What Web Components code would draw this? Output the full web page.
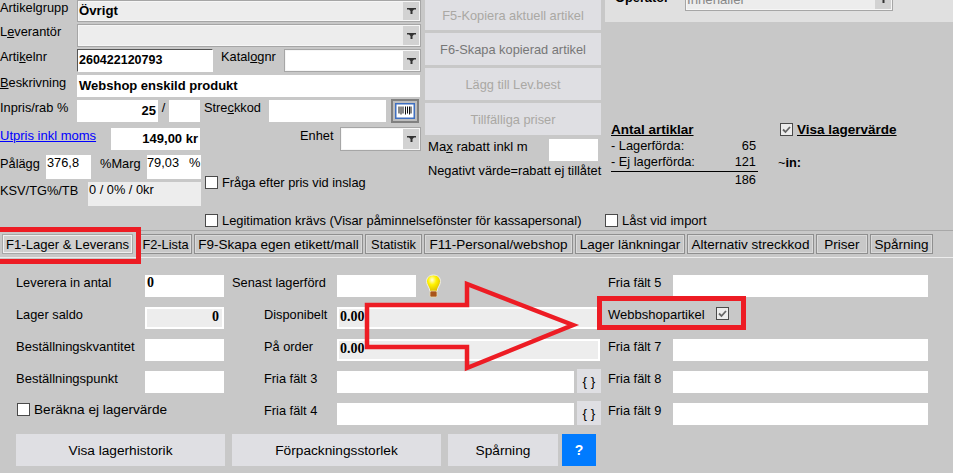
<!DOCTYPE html>
<html lang="sv">
<head>
<meta charset="utf-8">
<title>Artikel</title>
<style>
    html, body { margin: 0; padding: 0; height: 100%; overflow: hidden; background: #c8c8c8; }
    body { font: 12.8px "Liberation Sans", Arial, sans-serif; color: #000; }
</style>
</head>
<body>
<article-page></article-page>
<script>
class ErpField extends HTMLElement {
    constructor() {
        super();
        this.attachShadow({ mode: 'open' });
        this.shadowRoot.innerHTML = `
            <style>
                :host {
                    display: block;
                    flex: none;
                    box-sizing: border-box;
                    width: var(--w, 79px);
                    height: var(--h, 22px);
                    line-height: var(--h, 22px);
                    padding: 0 2px;
                    background: var(--bg, #fff);
                    white-space: nowrap;
                    overflow: hidden;
                }
                :host([inset]) { border: 2px solid #fff; line-height: 18px; background: #ededed; padding: 0 0 0 1px; }
                :host([sunken]) { border: 1px solid; border-color: #555 #fff #fff #555; line-height: 20px; padding: 0 1px; }
            </style>
            <slot></slot>
        `;
    }
}
customElements.define('erp-field', ErpField);

class ErpSelect extends HTMLElement {
    constructor() {
        super();
        this.attachShadow({ mode: 'open' });
        this.shadowRoot.innerHTML = `
            <style>
                :host {
                    display: flex;
                    flex: none;
                    box-sizing: border-box;
                    width: var(--w, 100%);
                    height: var(--h, 22px);
                    border: 1px solid #a6a6a6;
                    background: var(--bg, #ededed);
                    box-shadow: inset 0 0 0 1px #f6f6f6;
                    font-weight: bold;
                    font-size: 13.2px;
                }
                #value { flex: 1; padding: 0 1px; line-height: 20px; overflow: hidden; color: var(--c, inherit); font-weight: var(--fw, bold); }
                #arrow { width: 16px; margin: 1px 1px 1px 0; background: #d2d2d2; display: flex; align-items: center; justify-content: center; }
            </style>
            <div id="value"><slot></slot></div>
            <div id="arrow">
                <svg width="9" height="6" viewBox="0 0 9 6"><path d="M0 0h9v1.500H7L5.500 3v3h-2V3L2 1.500H0z" fill="#333"/></svg>
            </div>
        `;
    }
}
customElements.define('erp-select', ErpSelect);

class ErpCheck extends HTMLElement {
    constructor() {
        super();
        this.attachShadow({ mode: 'open' });
        const checked = this.hasAttribute('checked');
        this.shadowRoot.innerHTML = `
            <style>
                :host { display: flex; align-items: center; gap: 4px; white-space: nowrap; height: 15px; }
                #box {
                    box-sizing: border-box;
                    width: 13px;
                    height: 13px;
                    flex: none;
                    border: 1px solid #4a4a4a;
                    background: ${checked ? '#ececec' : '#fff'};
                    display: flex;
                    align-items: center;
                    justify-content: center;
                }
            </style>
            <span id="box">${checked ? '<svg width="9" height="8" viewBox="0 0 9 8"><path d="M1 3.500L3.500 6 8 1" fill="none" stroke="#666" stroke-width="1.800"/></svg>' : ''}</span>
            <slot></slot>
        `;
    }
}
customElements.define('erp-check', ErpCheck);

class ErpButton extends HTMLElement {
    constructor() {
        super();
        this.attachShadow({ mode: 'open' });
        this.shadowRoot.innerHTML = `
            <style>
                :host {
                    display: flex;
                    flex: none;
                    align-items: center;
                    justify-content: center;
                    box-sizing: border-box;
                    width: var(--w, 100%);
                    height: var(--h, 32px);
                    background: var(--bg, #dfdfe3);
                    color: var(--c, #000);
                    white-space: nowrap;
                }
            </style>
            <slot></slot>
        `;
    }
}
customElements.define('erp-button', ErpButton);

class ErpTab extends HTMLElement {
    constructor() {
        super();
        this.attachShadow({ mode: 'open' });
        this.shadowRoot.innerHTML = `
            <style>
                :host {
                    display: flex;
                    flex: none;
                    align-items: center;
                    justify-content: center;
                    box-sizing: border-box;
                    width: var(--w);
                    height: 20px;
                    border: 1px solid #8f8f8f;
                    box-shadow: inset 0 0 0 1px #d9d9d9;
                    background: #c8c8c8;
                    font-size: var(--fs, 13.5px);
                    white-space: nowrap;
                    overflow: hidden;
                }
                :host([active]) { border-color: #a8a8a8; box-shadow: inset 0 0 0 1px #f0f0f0; background: #d0d0d0; }
            </style>
            <slot></slot>
        `;
    }
}
customElements.define('erp-tab', ErpTab);

class TabStrip extends HTMLElement {
    constructor() {
        super();
        this.attachShadow({ mode: 'open' });
        this.shadowRoot.innerHTML = `
            <style>
                :host {
                    display: flex;
                    gap: 2px;
                    box-sizing: border-box;
                    height: 28px;
                    padding: 3px 0 0 2px;
                    border-top: 1px solid #a8a8a8;
                    border-bottom: 1px solid #ececec;
                }
            </style>
            <slot></slot>
        `;
    }
}
customElements.define('tab-strip', TabStrip);

class ArticleTop extends HTMLElement {
    constructor() {
        super();
        this.attachShadow({ mode: 'open' });
        this.shadowRoot.innerHTML = `
            <style>
                :host { display: flex; height: 230px; overflow: hidden; line-height: 15px; }
                u { text-decoration: underline; }
                #left { width: 421px; flex: none; }
                .row { display: flex; align-items: flex-start; }
                .label { flex: none; width: 77px; }
                #mid { width: 176px; flex: none; margin-left: 4px; display: flex; flex-direction: column; gap: 3px; }
                #right { margin-left: 4px; flex: 1; position: relative; }
                #panel { height: 22px; background: #e0e0e0; display: flex; overflow: hidden; padding-left: 10px; }
                #panel b { margin-top: -10px; width: 70px; }
                #summary { display: flex; margin-top: 100px; padding-left: 6px; }
                #count { width: 169px; flex: none; }
                .title { font-weight: bold; text-decoration: underline; font-size: 13.5px; margin-bottom: 1px; }
                .line { display: flex; justify-content: space-between; width: 145px; height: 16px; line-height: 16px; }
                .total { width: 147px; border-top: 1px solid #000; text-align: right; padding-right: 2px; box-sizing: border-box; margin-top: 1px; }
                .strong { font-weight: bold; font-size: 13px; }
                #barcode { box-sizing: border-box; width: 28px; height: 24px; margin: -1px 0 0 5px; border: 2px solid #808080; background: #bdbdbd; display: flex; align-items: center; justify-content: center; }
            </style>
            <div id="left">
                <div class="row"><span class="label">Artikelgrupp</span><erp-select style="--w:344px">Övrigt</erp-select></div>
                <div class="row" style="margin-top:2px"><span class="label">L<u>e</u>verantör</span><erp-select style="--w:344px;--h:23px"></erp-select></div>
                <div class="row" style="margin-top:2px">
                    <span class="label">Arti<u>k</u>elnr</span>
                    <erp-field sunken class="strong" style="--w:136px;--h:23px;padding-left:1px;font-size:12.500px">260422120793</erp-field>
                    <span style="margin-left:8px;width:63px;flex:none">Katal<u>o</u>gnr</span>
                    <erp-select style="--w:137px;--h:23px;--bg:#fff"></erp-select>
                </div>
                <div class="row" style="margin-top:3px">
                    <span class="label"><u>B</u>eskrivning</span>
                    <erp-field class="strong" style="--w:343px">Webshop enskild produkt</erp-field>
                </div>
                <div class="row" style="margin-top:3px">
                    <span class="label">Inpris/rab %</span>
                    <erp-field class="strong" style="--w:81px;text-align:right">25</erp-field>
                    <span style="width:11px;flex:none;text-align:center">/</span>
                    <erp-field style="--w:31px"></erp-field>
                    <span style="margin-left:4px;width:65px;flex:none">Stre<u>c</u>kkod</span>
                    <erp-field style="--w:117px"></erp-field>
                    <div id="barcode">
                        <svg width="20" height="16" viewBox="0 0 20 16">
                            <rect x=".75" y=".75" width="18.500" height="14.500" fill="#fff" stroke="#3f6fc0" stroke-width="1.500"/>
                            <path d="M4 3.500v7M6 3.500v8M8 3.500v7M10.500 3.500v8M12.500 3.500v7M14.500 3.500v8M16 3.500v7" stroke="#111" stroke-width="1"/>
                        </svg>
                    </div>
                </div>
                <div class="row" style="margin-top:5px">
                    <a style="color:#00f;text-decoration:underline;width:111px;flex:none;font-size:13px">Utpris inkl moms</a>
                    <erp-field class="strong" style="--w:89px;text-align:right">149,00 kr</erp-field>
                    <span style="margin-left:100px;width:40px;flex:none">Enhet</span>
                    <erp-select style="--w:81px;--h:24px;--bg:#fff;margin-top:-1px"></erp-select>
                </div>
                <div class="row" style="margin-top:4px">
                    <div style="width:205px;flex:none">
                        <div class="row">
                            <span style="width:46px;flex:none;margin-top:1px">Pålägg</span>
                            <erp-field style="--w:45px;--h:24px;line-height:16px;padding:0 1px">376,8</erp-field>
                            <span style="margin-left:9px;width:47px;flex:none;margin-top:1px">%Marg</span>
                            <erp-field style="--w:54px;--h:24px;line-height:16px;padding:0">79,03<span style="margin-left:10px">%</span></erp-field>
                        </div>
                        <div class="row" style="margin-top:3px">
                            <span style="width:88px;flex:none;margin-top:1px">KSV/TG%/TB</span>
                            <erp-field style="--w:113px;--h:24px;--bg:#ededed;line-height:16px;padding:0 1px">0 / 0% / 0kr</erp-field>
                        </div>
                    </div>
                    <erp-check style="margin-top:20px">Fråga efter pris vid inslag</erp-check>
                </div>
                <div class="row" style="margin-top:7px;padding-left:205px">
                    <erp-check style="font-size:12.900px">Legitimation krävs (Visar påminnelsefönster för kassapersonal)</erp-check>
                </div>
            </div>
            <div id="mid">
                <erp-button style="--h:30px;--c:#aaa8a4">F5-Kopiera aktuell artikel</erp-button>
                <erp-button style="--c:#777">F6-Skapa kopierad artikel</erp-button>
                <erp-button style="--c:#aaa8a4">Lägg till Lev.best</erp-button>
                <erp-button style="--c:#aaa8a4">Tillfälliga priser</erp-button>
                <div class="row" style="margin-top:1px;padding-left:3px">
                    <span style="width:121px;flex:none;font-size:13.100px">Ma<u>x</u> rabatt inkl m</span>
                    <erp-field style="--w:49px"></erp-field>
                </div>
                <div style="padding-left:3px;margin-top:-1px;white-space:nowrap">Negativt värde=rabatt ej tillåtet</div>
            </div>
            <div id="right">
                <div id="panel">
                    <b>Operatör</b>
                    <erp-select style="--w:208px;--h:22px;margin-top:-11px;--c:#888;--fw:normal">Innehåller</erp-select>
                </div>
                <div id="summary">
                    <div id="count">
                        <div class="title">Antal artiklar</div>
                        <div class="line"><span>- Lagerförda:</span><span>65</span></div>
                        <div class="line"><span>- Ej lagerförda:</span><span>121</span></div>
                        <div class="total">186</div>
                    </div>
                    <div>
                        <erp-check checked><span class="title">Visa lagervärde</span></erp-check>
                        <div style="margin:18px 0 0 -2px">~<b>in:</b></div>
                    </div>
                </div>
                <erp-check style="margin:26px 0 0 0;font-size:13px">Låst vid import</erp-check>
            </div>
        `;
    }
}
customElements.define('article-top', ArticleTop);

class StockForm extends HTMLElement {
    constructor() {
        super();
        this.attachShadow({ mode: 'open' });
        this.shadowRoot.innerHTML = `
            <style>
                :host {
                    display: grid;
                    grid-template-columns: 129px 79px 8px 105px 79px 158px 3px 24px 7px 65px 255px;
                    grid-template-rows: repeat(5, 22px) 32px;
                    row-gap: 10px;
                    padding: 17px 0 0 16px;
                    line-height: 15px;
                }
                .r1 { grid-row: 1; } .r2 { grid-row: 2; } .r3 { grid-row: 3; } .r4 { grid-row: 4; } .r5 { grid-row: 5; }
                .l1 { grid-column: 1; }
                .i1 { grid-column: 2; }
                .l2 { grid-column: 4; padding-left: 32px; }
                .i2 { grid-column: 5; }
                .wide { grid-column: 5 / 9; --w: 263px; }
                .mid { grid-column: 5 / 7; --w: 237px; }
                .b { grid-column: 8; }
                .l3 { grid-column: 10; white-space: nowrap; }
                .i3 { grid-column: 11; --w: 255px; }
                .num { font: bold 14px "Liberation Serif", serif; }
                #actions { grid-column: 1 / -1; grid-row: 6; display: flex; gap: 7px; margin-top: -1px; font-size: 13.700px; }
                #bulb { grid-column: 6; grid-row: 1; margin: -1px 0 0 9px; }
                .brace { --w: 24px; --h: 24px; --bg: #dfdfe3; font-size: 13.500px; margin-top: -2px; }
            </style>
            <span class="r1 l1">Leverera in antal</span>
            <erp-field class="r1 i1 num">0</erp-field>
            <span class="r1 l2" style="padding-left:0">Senast lagerförd</span>
            <erp-field class="r1 i2"></erp-field>
            <svg id="bulb" width="17" height="24" viewBox="0 0 17 24">
                <defs>
                    <radialGradient id="glow" cx=".4" cy=".3" r=".75">
                        <stop offset="0" stop-color="#fffde0"/>
                        <stop offset=".4" stop-color="#fff200"/>
                        <stop offset="1" stop-color="#d8b400"/>
                    </radialGradient>
                </defs>
                <path d="M8.500 1C4 1 1.500 4 1.500 7.500c0 3.500 3 5.500 3.500 10h7c.5-4.500 3.500-6.500 3.500-10C15.500 4 13 1 8.500 1z" fill="url(#glow)" stroke="#eee" stroke-width="1"/>
                <rect x="5" y="17" width="7" height="6" rx="1.500" fill="#a8541a" stroke="#e8d8a8" stroke-width=".8"/>
            </svg>
            <span class="r1 l3">Fria fält 5</span>
            <erp-field class="r1 i3"></erp-field>

            <span class="r2 l1">Lager saldo</span>
            <erp-field inset class="r2 i1 num" style="text-align:right;padding-right:3px">0</erp-field>
            <span class="r2 l2">Disponibelt</span>
            <erp-field inset class="r2 wide num">0.00</erp-field>
            <span class="r2 l3" style="font-size:13px">Webbshopartikel</span>
            <erp-check checked class="r2" style="grid-column:11;margin:-1px 0 0 43px"></erp-check>

            <span class="r3 l1" style="font-size:13px">Beställningskvantitet</span>
            <erp-field class="r3 i1"></erp-field>
            <span class="r3 l2">På order</span>
            <erp-field inset class="r3 wide num">0.00</erp-field>
            <span class="r3 l3">Fria fält 7</span>
            <erp-field class="r3 i3"></erp-field>

            <span class="r4 l1" style="font-size:13px">Beställningspunkt</span>
            <erp-field class="r4 i1"></erp-field>
            <span class="r4 l2">Fria fält 3</span>
            <erp-field class="r4 mid"></erp-field>
            <erp-button class="r4 b brace">{ }</erp-button>
            <span class="r4 l3">Fria fält 8</span>
            <erp-field class="r4 i3"></erp-field>

            <erp-check class="r5" style="grid-column:1 / 3;margin:-1px 0 0 1px;align-self:start;font-size:13.600px">Beräkna ej lagervärde</erp-check>
            <span class="r5 l2">Fria fält 4</span>
            <erp-field class="r5 mid"></erp-field>
            <erp-button class="r5 b brace">{ }</erp-button>
            <span class="r5 l3">Fria fält 9</span>
            <erp-field class="r5 i3"></erp-field>

            <div id="actions">
                <erp-button style="--w:209px">Visa lagerhistorik</erp-button>
                <erp-button style="--w:209px">Förpackningsstorlek</erp-button>
                <erp-button style="--w:110px">Spårning</erp-button>
                <erp-button style="--w:34px;--bg:#007bff;--c:#fff;margin-left:-3px;font-weight:bold;font-size:14px">?</erp-button>
            </div>
        `;
    }
}
customElements.define('stock-form', StockForm);

class ArticlePage extends HTMLElement {
    constructor() {
        super();
        this.attachShadow({ mode: 'open' });
        this.shadowRoot.innerHTML = `
            <style>
                :host { display: block; position: relative; width: 953px; height: 473px; overflow: hidden; }
                .mark { position: absolute; box-sizing: border-box; border: 5px solid #ed1c24; }
                svg { position: absolute; left: 0; top: 0; }
            </style>
            <article-top></article-top>
            <tab-strip>
                <erp-tab active style="--w:131px;--fs:13.100px">F1-Lager &amp; Leverans</erp-tab>
                <erp-tab style="--w:53px;margin-left:4px;--fs:12.800px">F2-Lista</erp-tab>
                <erp-tab style="--w:169px">F9-Skapa egen etikett/mall</erp-tab>
                <erp-tab style="--w:57px;--fs:12.800px">Statistik</erp-tab>
                <erp-tab style="--w:149px">F11-Personal/webshop</erp-tab>
                <erp-tab style="--w:110px">Lager länkningar</erp-tab>
                <erp-tab style="--w:127px">Alternativ streckkod</erp-tab>
                <erp-tab style="--w:52px">Priser</erp-tab>
                <erp-tab style="--w:63px">Spårning</erp-tab>
            </tab-strip>
            <stock-form></stock-form>
            <div class="mark" style="left:-6px;top:227px;width:147px;height:37px"></div>
            <div class="mark" style="left:597px;top:296px;width:149px;height:34px"></div>
            <svg width="953" height="473" viewBox="0 0 953 473">
                <path d="M367 305H467V284L573 325 467 368V347H367z" fill="none" stroke="#ed1c24" stroke-width="4.500"/>
            </svg>
        `;
    }
}
customElements.define('article-page', ArticlePage);
</script>
</body>
</html>
